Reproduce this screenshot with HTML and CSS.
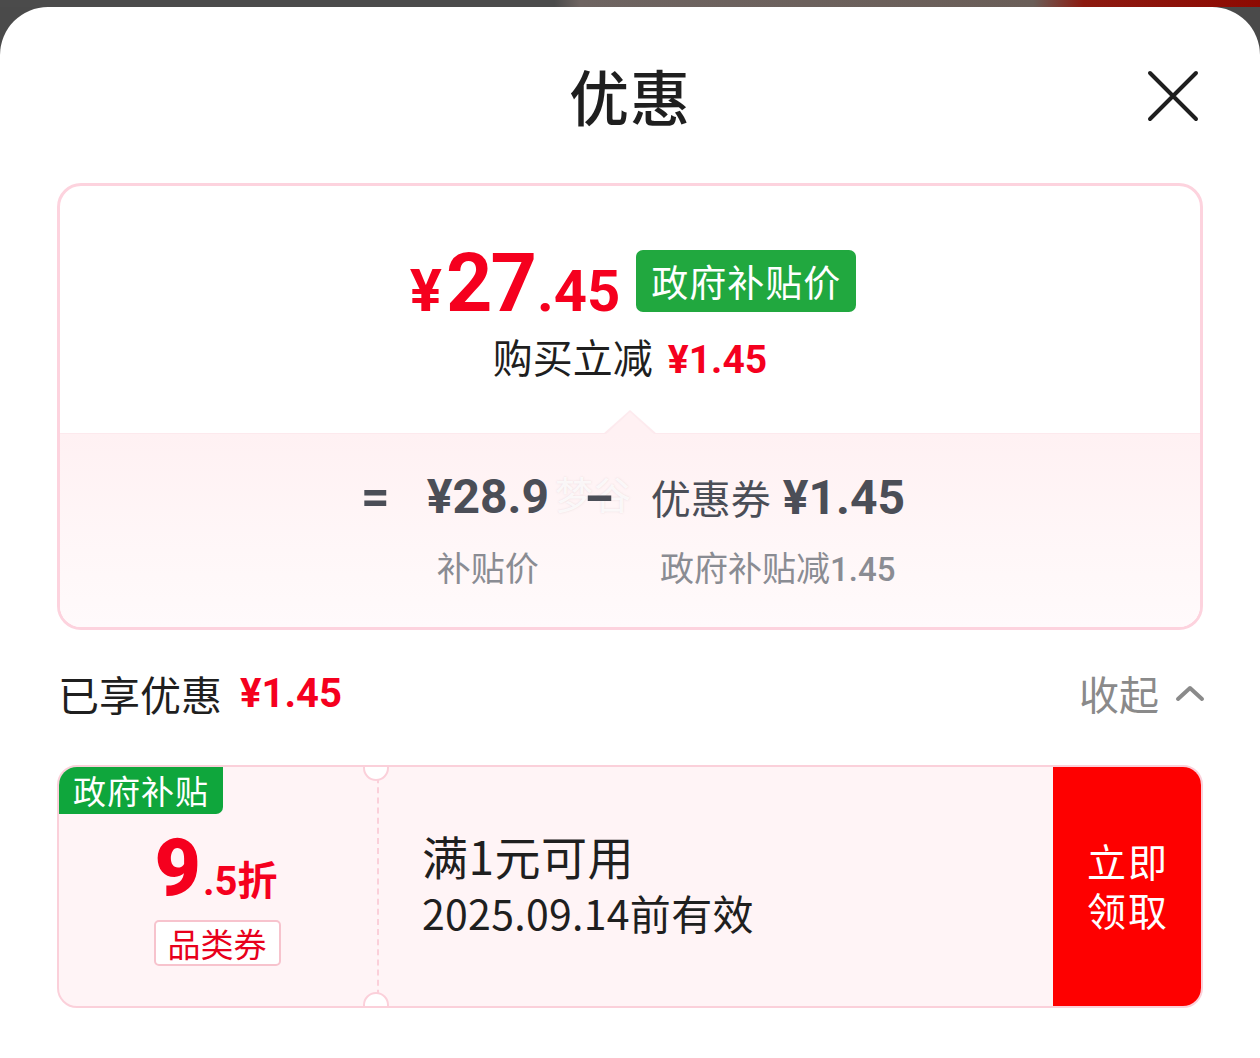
FILE: index.html
```html
<!DOCTYPE html>
<html lang="zh-CN">
<head>
<meta charset="utf-8">
<title>优惠</title>
<link rel="stylesheet" href="styles.css">
</head>
<body>
<div class="backdrop"></div>
<div class="sheet">
  <header class="head">
    <span></span>
    <h1 class="title">优惠</h1>
    <button class="close" aria-label="关闭">
      <svg viewBox="0 0 52 52" width="52" height="52"><path d="M3 3 L49 49 M49 3 L3 49" stroke="#1f1f1f" stroke-width="4" stroke-linecap="round" fill="none"/></svg>
    </button>
  </header>

  <section class="card">
    <div class="card-top">
      <div class="price-row">
        <div class="price"><span class="yen">¥</span><span class="int">27</span><span class="dec">.45</span></div>
        <span class="gov-badge">政府补贴价</span>
      </div>
      <div class="save-row">购买立减 <span class="red-num">¥1.45</span></div>
    </div>
    <div class="card-bottom">
      <div class="calc">
        <span class="op">=</span>
        <div class="term">
          <div class="val num">¥28.9</div>
          <div class="lbl">补贴价</div>
        </div>
        <span class="op minus">-</span>
        <div class="term">
          <div class="val"><span class="cn">优惠券</span><span class="num gap">¥1.45</span></div>
          <div class="lbl">政府补贴减<span class="num-s">1.45</span></div>
        </div>
        <span class="watermark">梦谷</span>
      </div>
    </div>
  </section>

  <div class="enjoy-row">
    <div class="enjoy">已享优惠 <span class="red-num sm">¥1.45</span></div>
    <div class="collapse">收起
      <svg viewBox="0 0 30 18" width="30" height="18"><path d="M3 15 L15 4 L27 15" stroke="#8a8a8a" stroke-width="4" fill="none" stroke-linecap="round" stroke-linejoin="round"/></svg>
    </div>
  </div>

  <div class="coupon">
    <div class="c-left">
      <span class="c-tag">政府补贴</span>
      <div class="c-disc"><span class="big">9</span><span class="small">.5折</span></div>
      <span class="c-kind">品类券</span>
    </div>
    <div class="c-mid">
      <div class="c-cond">满1元可用</div>
      <div class="c-date">2025.09.14前有效</div>
    </div>
    <button class="c-btn"><span class="c-line">立即</span><span class="c-line">领取</span></button>
  </div>
</div>
</body>
</html>
```

FILE: styles.css
```css
* { box-sizing: border-box; }
html, body {
  margin: 0;
  padding: 0;
  height: 100%;
  overflow: hidden;
}
body {
  font-family: "Noto Sans CJK SC", "Noto Sans", sans-serif;
  background: #4a4a4a;
  position: relative;
}
.backdrop {
  height: 7px;
  background: linear-gradient(90deg, #4b4b4b 0%, #4b4b4b 44%, #6e6461 46%, #6a5e58 82%, #8c1a10 86%, #8e0a02 100%);
}
.sheet {
  background: #fff;
  border-radius: 48px 48px 0 0;
  height: calc(100vh - 7px);
  overflow: hidden;
}

/* header */
.head {
  display: grid;
  grid-template-columns: 1fr auto 1fr;
  align-items: start;
  height: 176px;
  padding: 46px 57px 0;
}
.title {
  margin: 0;
  font-size: 60px;
  line-height: 84px;
  font-weight: 500;
  color: #1f1f1f;
  letter-spacing: 1px;
}
.close {
  justify-self: end;
  margin-top: 17px;
  margin-right: 4px;
  padding: 0;
  border: 0;
  background: none;
  width: 52px;
  height: 52px;
  display: block;
}

/* summary card */
.card {
  margin: 0 57px;
  border: 3px solid #fdd3de;
  border-radius: 24px;
  overflow: hidden;
}
.card-top {
  height: 247px;
  padding-top: 62px;
  display: flex;
  flex-direction: column;
  align-items: center;
}
.price-row {
  display: flex;
  align-items: center;
  gap: 16px;
  height: 66px;
  margin-left: 6px;
}
.price {
  color: #f5001e;
  font-family: Roboto, "Liberation Sans", sans-serif;
  font-weight: 700;
  line-height: 1;
  display: flex;
  align-items: baseline;
  margin-top: 4px;
}
.price .yen { font-size: 60px; margin-right: 4px; }
.price .int { font-size: 81px; letter-spacing: -2px; }
.price .dec { font-size: 58px; margin-left: 2px; }
.gov-badge {
  background: #21a83f;
  color: #fff;
  font-size: 37px;
  line-height: 62px;
  padding: 0 15px;
  border-radius: 7px;
  letter-spacing: 1px;
}
.save-row {
  margin-top: 16px;
  font-size: 40px;
  line-height: 52px;
  color: #1f1f1f;
}
.red-num {
  color: #f5001e;
  font-family: Roboto, "Liberation Sans", sans-serif;
  font-weight: 700;
  font-size: 39px;
  margin-left: 6px;
}
.card-bottom {
  position: relative;
  height: 194px;
  background: linear-gradient(180deg, #fff1f3 0%, #fff7f8 60%, #fffafb 100%);
  border-top: 1px solid #fde9ed;
  padding-top: 34px;
}
.card-bottom::before {
  content: "";
  position: absolute;
  left: 50%;
  top: -24px;
  margin-left: -27px;
  border-left: 27px solid transparent;
  border-right: 27px solid transparent;
  border-bottom: 24px solid #fdeaee;
}
.card-bottom::after {
  content: "";
  position: absolute;
  left: 50%;
  top: -22px;
  margin-left: -24px;
  border-left: 24px solid transparent;
  border-right: 24px solid transparent;
  border-bottom: 22px solid #fff1f3;
}
.calc {
  position: relative;
  display: flex;
  justify-content: center;
  align-items: flex-start;
  gap: 37px;
  margin-left: 6px;
}
.op {
  font-family: Roboto, "Liberation Sans", sans-serif;
  font-weight: 700;
  font-size: 50px;
  line-height: 58px;
  color: #4b4e57;
}
.op.minus {
  position: relative;
  z-index: 2;
  display: inline-block;
  transform: scaleX(1.7);
  margin: 0 4px;
}
.term {
  display: flex;
  flex-direction: column;
  align-items: center;
}
.val {
  line-height: 58px;
  height: 58px;
  color: #4b4e57;
  white-space: nowrap;
}
.num {
  font-family: Roboto, "Liberation Sans", sans-serif;
  font-weight: 700;
  font-size: 48px;
  line-height: 58px;
}
.num.gap { margin-left: 12px; }
.val .cn {
  font-size: 40px;
  font-weight: 400;
  line-height: 58px;
}
.lbl {
  margin-top: 19px;
  font-size: 34px;
  line-height: 44px;
  height: 44px;
  color: #8a8c93;
  white-space: nowrap;
}
.num-s {
  font-family: Roboto, "Liberation Sans", sans-serif;
  font-weight: 500;
  font-size: 33px;
  line-height: 1;
}
.watermark {
  position: absolute;
  left: 50%;
  top: -4px;
  margin-left: -78px;
  font-size: 38px;
  line-height: 58px;
  color: rgba(255, 255, 255, 0.8);
  text-shadow: 0 0 2px rgba(180, 160, 165, 0.3);
  pointer-events: none;
  z-index: 1;
}

/* enjoyed row */
.enjoy-row {
  margin: 40px 55px 0 58px;
  height: 46px;
  display: flex;
  justify-content: space-between;
  align-items: center;
}
.enjoy {
  font-size: 41px;
  color: #1f1f1f;
  display: flex;
  align-items: center;
}
.red-num.sm { margin-left: 18px; font-size: 40px; }
.collapse {
  font-size: 40px;
  color: #8a8a8a;
  display: flex;
  align-items: center;
  gap: 16px;
}

/* coupon */
.coupon {
  margin: 49px 57px 0;
  height: 243px;
  display: flex;
  border: 2px solid #fbd0da;
  border-radius: 20px;
  background: #fff4f6;
  overflow: hidden;
  position: relative;
}
.c-left {
  width: 320px;
  display: flex;
  flex-direction: column;
  align-items: center;
  position: relative;
  border-right: 2px dashed #fbd0da;
}
.c-left::before,
.c-left::after {
  content: "";
  position: absolute;
  right: -12px;
  width: 22px;
  height: 22px;
  border-radius: 50%;
  background: #fff;
  border: 2px solid #fbd0da;
}
.c-left::before { top: -12px; }
.c-left::after { bottom: -12px; }
.c-tag {
  align-self: flex-start;
  background: #0fa63c;
  color: #fff;
  font-size: 33px;
  line-height: 47px;
  height: 47px;
  padding: 0 14px;
  border-radius: 0 0 7px 0;
  letter-spacing: 1px;
}
.c-disc {
  margin-top: 14px;
  color: #f5001e;
  font-family: Roboto, "Liberation Sans", sans-serif;
  font-weight: 900;
  display: flex;
  align-items: baseline;
  line-height: 1;
  height: 70px;
  margin-right: 4px;
}
.c-disc .big { font-size: 80px; }
.c-disc .small {
  font-size: 40px;
  margin-left: 2px;
  font-weight: 700;
  font-family: Roboto, "Noto Sans CJK SC", sans-serif;
}
.c-kind {
  margin-top: 22px;
  border: 2px solid #f7c3cd;
  border-radius: 5px;
  color: #e8001c;
  font-size: 33px;
  line-height: 42px;
  padding: 0 12px;
  background: #fff;
  margin-right: 2px;
}
.c-mid {
  flex: 1;
  padding-left: 43px;
  padding-bottom: 8px;
  display: flex;
  flex-direction: column;
  justify-content: center;
  color: #1f1f1f;
}
.c-cond {
  font-size: 46px;
  line-height: 58px;
  letter-spacing: 0.5px;
}
.c-date {
  font-size: 41px;
  line-height: 56px;
  letter-spacing: 0.3px;
}
.c-btn {
  width: 150px;
  margin: -2px -2px -2px 0;
  border: 0;
  background: #fe0000;
  color: #fff;
  font-family: "Noto Sans CJK SC", sans-serif;
  font-size: 39px;
  padding: 0 0 4px;
  letter-spacing: 2px;
  border-radius: 0 20px 20px 0;
  display: flex;
  flex-direction: column;
  align-items: center;
  justify-content: center;
}
.c-line {
  display: block;
  line-height: 49px;
  height: 49px;
}
```
